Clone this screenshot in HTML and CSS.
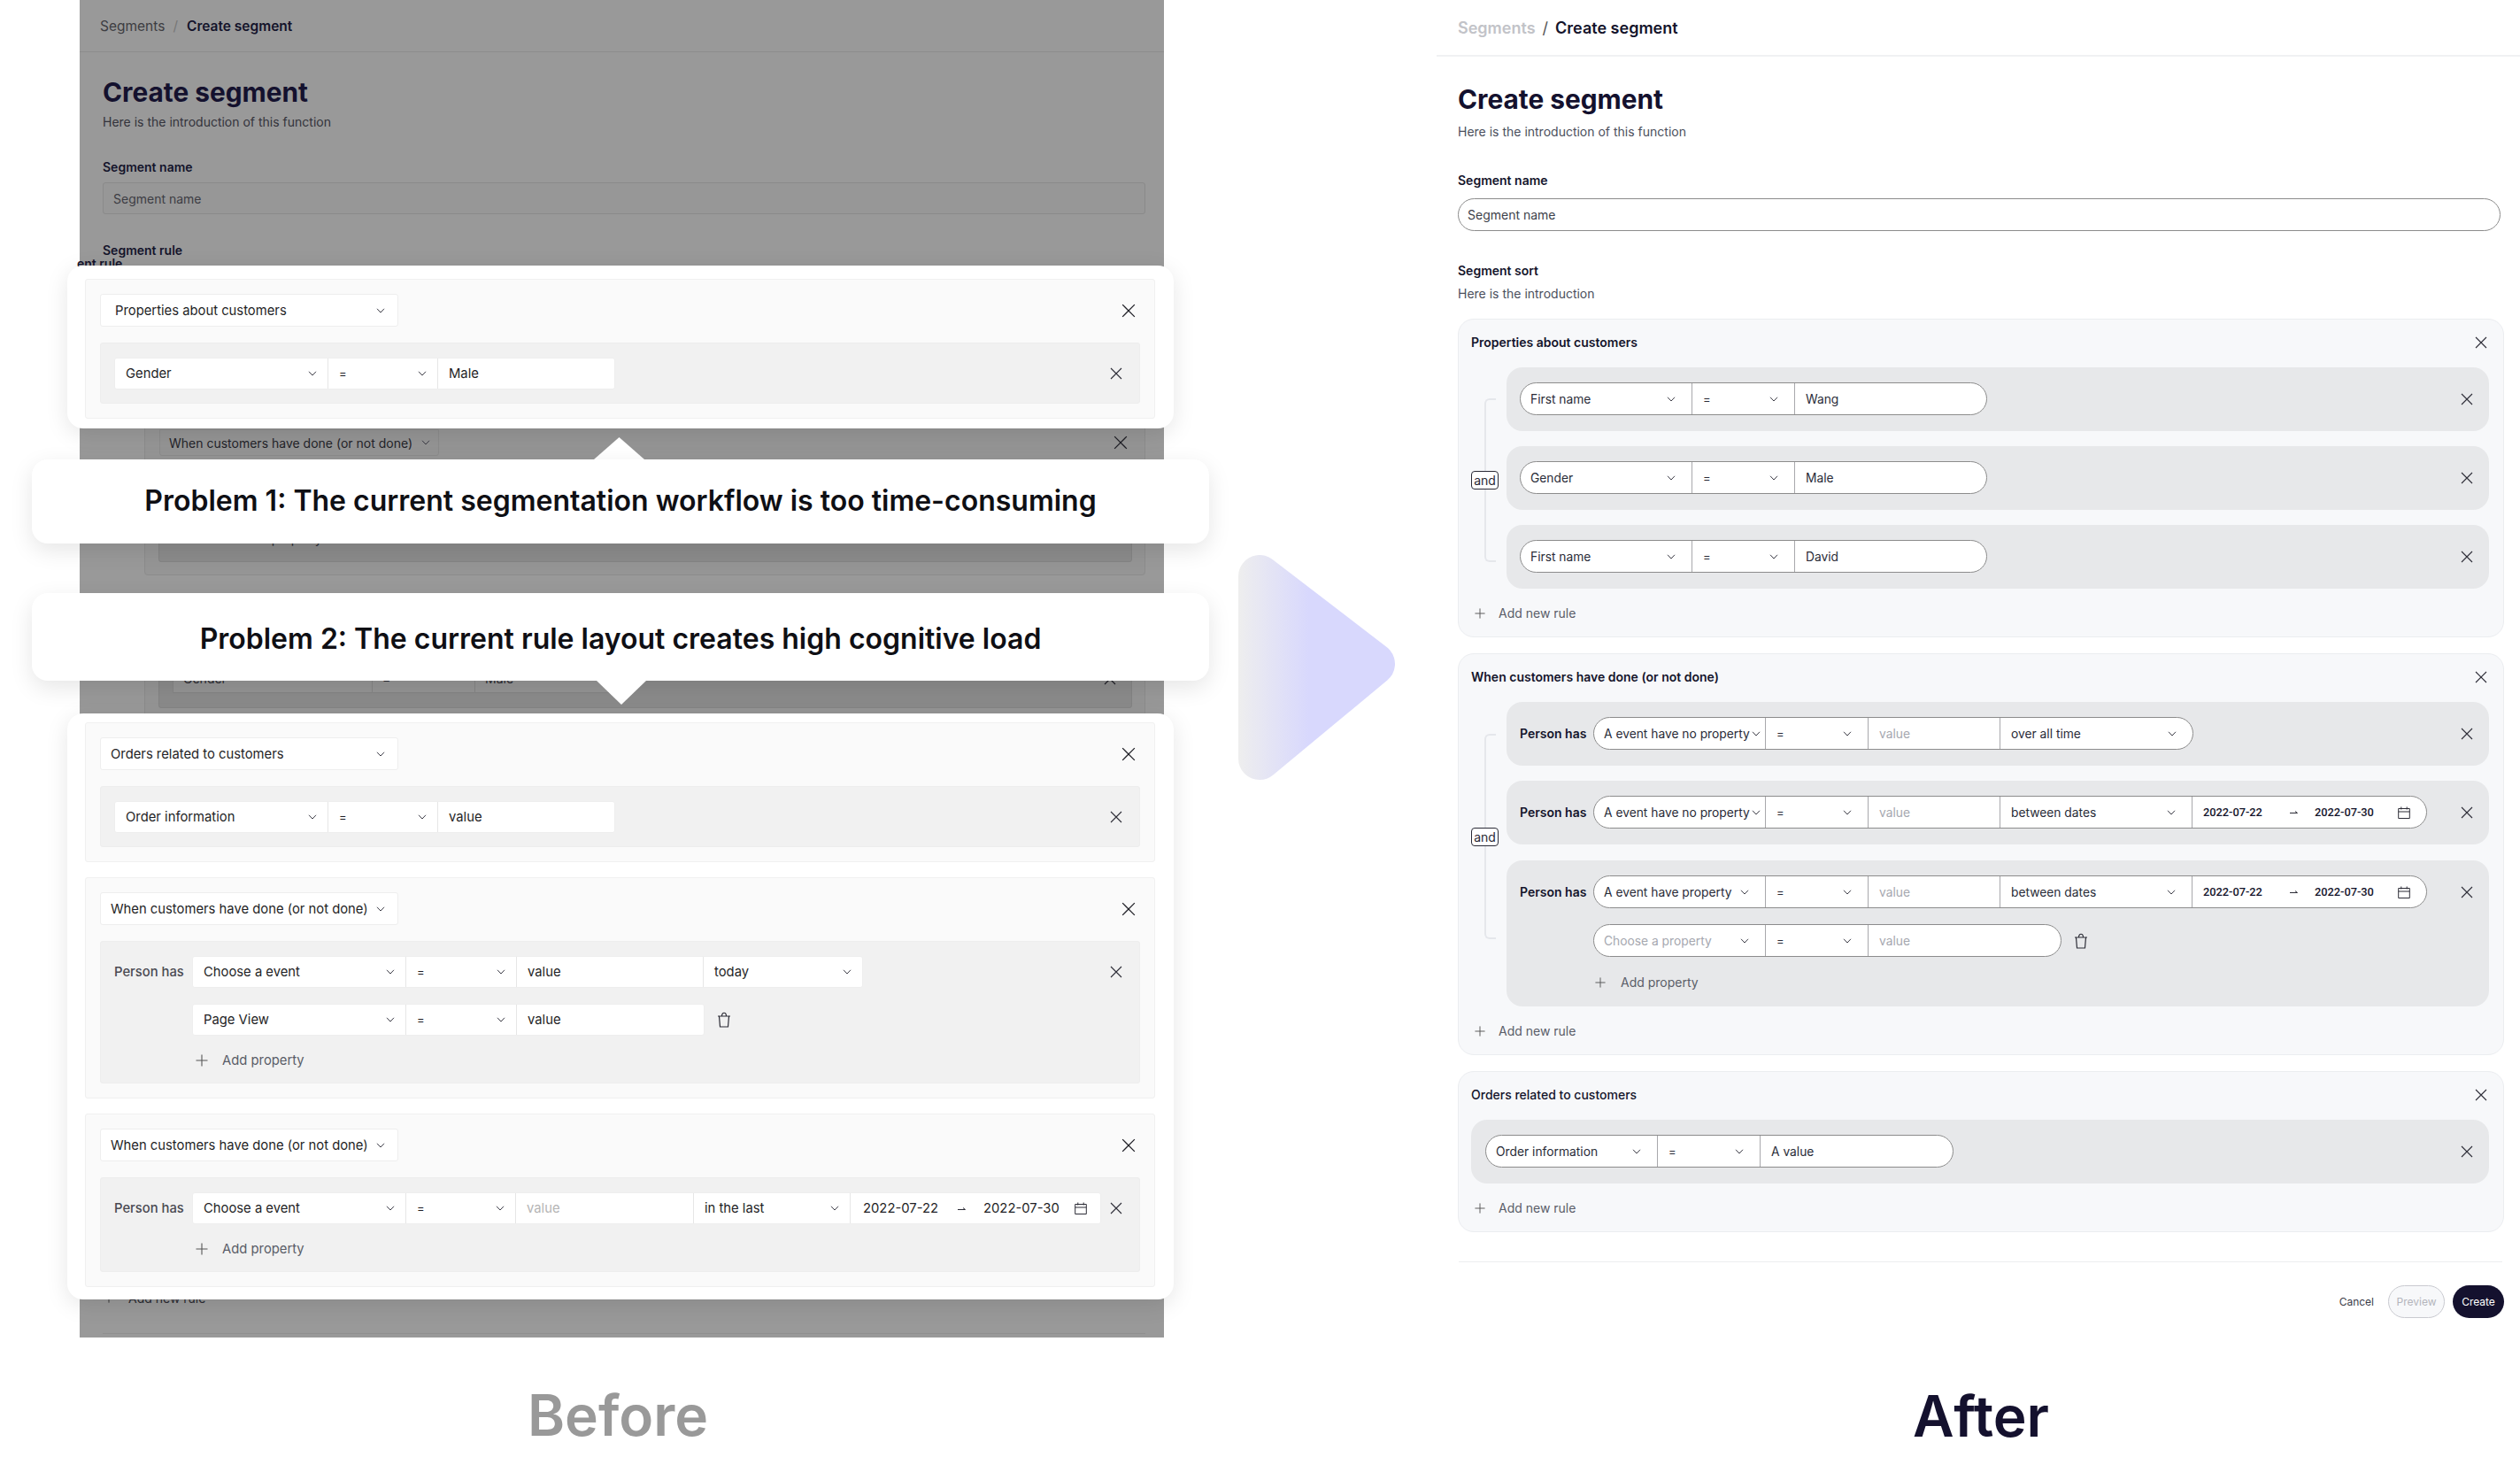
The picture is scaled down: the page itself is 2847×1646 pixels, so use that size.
FILE: index.html
```html
<!DOCTYPE html>
<html lang="en">
<head>
<meta charset="utf-8">
<title>Create segment: before and after</title>
<link rel="stylesheet" href="styles.css">
</head>
<body>
<svg class="sprite" aria-hidden="true">
  <symbol id="chev" viewBox="0 0 10 6"><path d="M1 .8 5 5l4-4.200" fill="none" stroke="currentColor" stroke-width="1"/></symbol>
  <symbol id="x" viewBox="0 0 14 14"><path d="M1 1l12 12M13 1 1 13" fill="none" stroke="currentColor" stroke-width="1.100"/></symbol>
  <symbol id="plus" viewBox="0 0 14 14"><path d="M7 .5v13M.5 7h13" fill="none" stroke="currentColor" stroke-width="1.100"/></symbol>
  <symbol id="trash" viewBox="0 0 16 18"><path d="M2.500 5h11l-1 12h-9zM1 5h14M5.500 5c0-5 5-5 5 0" fill="none" stroke="currentColor" stroke-width="1.200"/></symbol>
  <symbol id="cal" viewBox="0 0 14 14"><path d="M.7 2.500h12.600v11H.7zM.7 6h12.600M3.800.5v3M10.200.5v3" fill="none" stroke="currentColor" stroke-width="1"/></symbol>
  <symbol id="to" viewBox="0 0 9 5"><path d="M0 3.500h8.500L6 1.500" fill="none" stroke="currentColor" stroke-width="1"/></symbol>
</svg>

<main class="page">
  <section class="before-col">
    <div class="before">
      <header class="crumbs">
        <span class="crumb-parent">Segments</span><span class="crumb-sep">/</span><span class="crumb-current">Create segment</span>
      </header>
      <div class="ghost-form">
        <h1 class="title">Create segment</h1>
        <p class="intro">Here is the introduction of this function</p>
        <div class="label label-name">Segment name</div>
        <div class="name-input">Segment name</div>
        <div class="label label-rule">Segment rule</div>

        <div class="ghost-rules">
          <div class="ghost-box ghost-box-a">
            <div class="ghost-head">
              <div class="ghost-select">When customers have done (or not done)<svg class="chev"><use href="#chev"/></svg></div>
              <svg class="ix ghost-x"><use href="#x"/></svg>
            </div>
            <div class="ghost-inner ghost-inner-a"><span class="ghost-add">Add property</span></div>
          </div>
          <div class="ghost-box ghost-box-b">
            <div class="ghost-inner ghost-inner-b">
              <div class="ghost-fields">
                <span class="gf gf-1">Gender</span><span class="gf gf-2">=</span><span class="gf gf-3">Male</span>
              </div>
              <svg class="ix ghost-row-x"><use href="#x"/></svg>
            </div>
          </div>
          <div class="ghost-new"><svg class="ghost-plus"><use href="#plus"/></svg>Add new rule</div>
          <div class="ghost-line"></div>
        </div>
      </div>

      <span class="clipped-label">ent rule</span>

      <div class="card card-top">
        <div class="box">
          <div class="box-head">
            <div class="select">Properties about customers<svg class="chev"><use href="#chev"/></svg></div>
            <svg class="ix box-x"><use href="#x"/></svg>
          </div>
          <div class="row">
            <div class="fields">
              <div class="f l241">Gender<svg class="chev"><use href="#chev"/></svg></div>
              <div class="f l124 op">=<svg class="chev"><use href="#chev"/></svg></div>
              <div class="f l199">Male</div>
            </div>
            <svg class="ix row-x"><use href="#x"/></svg>
          </div>
        </div>
      </div>

      <div class="notch notch-up"></div>
      <div class="problem problem-one">Problem 1: The current segmentation workflow is too time-consuming</div>
      <div class="problem problem-two">Problem 2: The current rule layout creates high cognitive load</div>
      <div class="notch notch-down"></div>

      <div class="card card-bottom">
        <div class="box">
          <div class="box-head">
            <div class="select tight">Orders related to customers<svg class="chev"><use href="#chev"/></svg></div>
            <svg class="ix box-x"><use href="#x"/></svg>
          </div>
          <div class="row">
            <div class="fields">
              <div class="f l241">Order information<svg class="chev"><use href="#chev"/></svg></div>
              <div class="f l124 op">=<svg class="chev"><use href="#chev"/></svg></div>
              <div class="f l199">value</div>
            </div>
            <svg class="ix row-x"><use href="#x"/></svg>
          </div>
        </div>

        <div class="box">
          <div class="box-head">
            <div class="select tight">When customers have done (or not done)<svg class="chev"><use href="#chev"/></svg></div>
            <svg class="ix box-x"><use href="#x"/></svg>
          </div>
          <div class="row">
            <div class="person">Person has</div>
            <div class="stack">
              <div class="fields">
                <div class="f l241">Choose a event<svg class="chev"><use href="#chev"/></svg></div>
                <div class="f l125 op">=<svg class="chev"><use href="#chev"/></svg></div>
                <div class="f l211">value</div>
                <div class="f l179">today<svg class="chev"><use href="#chev"/></svg></div>
              </div>
              <div class="field-line">
                <div class="fields">
                  <div class="f l241">Page View<svg class="chev"><use href="#chev"/></svg></div>
                  <div class="f l125 op">=<svg class="chev"><use href="#chev"/></svg></div>
                  <div class="f l211">value</div>
                </div>
                <svg class="trash"><use href="#trash"/></svg>
              </div>
              <div class="add add-prop"><svg class="plus"><use href="#plus"/></svg>Add property</div>
            </div>
            <svg class="ix row-x"><use href="#x"/></svg>
          </div>
        </div>

        <div class="box">
          <div class="box-head">
            <div class="select tight">When customers have done (or not done)<svg class="chev"><use href="#chev"/></svg></div>
            <svg class="ix box-x"><use href="#x"/></svg>
          </div>
          <div class="row">
            <div class="person">Person has</div>
            <div class="stack">
              <div class="fields">
                <div class="f l241">Choose a event<svg class="chev"><use href="#chev"/></svg></div>
                <div class="f l124 op">=<svg class="chev"><use href="#chev"/></svg></div>
                <div class="f l201 muted">value</div>
                <div class="f l177">in the last<svg class="chev"><use href="#chev"/></svg></div>
                <div class="f l282 dates"><span>2022-07-22</span><svg class="to"><use href="#to"/></svg><span>2022-07-30</span><svg class="cal"><use href="#cal"/></svg></div>
              </div>
              <div class="add add-prop"><svg class="plus"><use href="#plus"/></svg>Add property</div>
            </div>
            <svg class="ix row-x"><use href="#x"/></svg>
          </div>
        </div>
      </div>
    </div>
    <div class="caption caption-before">Before</div>
  </section>

  <svg class="next" viewBox="0 0 177 254" aria-hidden="true">
    <defs>
      <linearGradient id="nextfill" gradientUnits="userSpaceOnUse" x1="0" y1="0" x2="80" y2="0">
        <stop offset="0" stop-color="#eeeeee"/>
        <stop offset="1" stop-color="#d8d8fd"/>
      </linearGradient>
    </defs>
    <polygon points="24,24 24,230 153,123" fill="url(#nextfill)" stroke="url(#nextfill)" stroke-width="48" stroke-linejoin="round"/>
  </svg>

  <section class="after-col">
    <header class="crumbs">
      <span class="crumb-parent">Segments</span><span class="crumb-sep">/</span><span class="crumb-current">Create segment</span>
    </header>
    <div class="form">
      <h1 class="title">Create segment</h1>
      <p class="intro">Here is the introduction of this function</p>
      <div class="label label-name">Segment name</div>
      <div class="name-input">Segment name</div>
      <div class="label label-sort">Segment sort</div>
      <p class="intro intro-sort">Here is the introduction</p>

      <div class="box">
        <div class="box-head">
          <div class="box-title">Properties about customers</div>
          <svg class="ix box-x"><use href="#x"/></svg>
        </div>
        <div class="group">
          <div class="connector"><div class="bracket"><span class="and">and</span></div></div>
          <div class="rules">
            <div class="row">
              <div class="fields">
                <div class="f r194">First name<svg class="chev"><use href="#chev"/></svg></div>
                <div class="f r116 op">=<svg class="chev"><use href="#chev"/></svg></div>
                <div class="f r216">Wang</div>
              </div>
              <svg class="ix row-x"><use href="#x"/></svg>
            </div>
            <div class="row">
              <div class="fields">
                <div class="f r194">Gender<svg class="chev"><use href="#chev"/></svg></div>
                <div class="f r116 op">=<svg class="chev"><use href="#chev"/></svg></div>
                <div class="f r216">Male</div>
              </div>
              <svg class="ix row-x"><use href="#x"/></svg>
            </div>
            <div class="row">
              <div class="fields">
                <div class="f r194">First name<svg class="chev"><use href="#chev"/></svg></div>
                <div class="f r116 op">=<svg class="chev"><use href="#chev"/></svg></div>
                <div class="f r216">David</div>
              </div>
              <svg class="ix row-x"><use href="#x"/></svg>
            </div>
          </div>
        </div>
        <div class="add add-rule"><svg class="plus"><use href="#plus"/></svg>Add new rule</div>
      </div>

      <div class="box">
        <div class="box-head">
          <div class="box-title">When customers have done (or not done)</div>
          <svg class="ix box-x"><use href="#x"/></svg>
        </div>
        <div class="group">
          <div class="connector connector-tall"><div class="bracket"><span class="and">and</span></div></div>
          <div class="rules">
            <div class="row">
              <div class="person">Person has</div>
              <div class="stack">
                <div class="fields">
                  <div class="f r194 snug">A event have no property<svg class="chev"><use href="#chev"/></svg></div>
                  <div class="f r116 op">=<svg class="chev"><use href="#chev"/></svg></div>
                  <div class="f r149 muted">value</div>
                  <div class="f r217">over all time<svg class="chev"><use href="#chev"/></svg></div>
                </div>
              </div>
              <svg class="ix row-x"><use href="#x"/></svg>
            </div>
            <div class="row">
              <div class="person">Person has</div>
              <div class="stack">
                <div class="fields">
                  <div class="f r194 snug">A event have no property<svg class="chev"><use href="#chev"/></svg></div>
                  <div class="f r116 op">=<svg class="chev"><use href="#chev"/></svg></div>
                  <div class="f r149 muted">value</div>
                  <div class="f r217">between dates<svg class="chev"><use href="#chev"/></svg></div>
                  <div class="f r264 dates"><span>2022-07-22</span><svg class="to"><use href="#to"/></svg><span>2022-07-30</span><svg class="cal"><use href="#cal"/></svg></div>
                </div>
              </div>
              <svg class="ix row-x"><use href="#x"/></svg>
            </div>
            <div class="row row-tall">
              <div class="person">Person has</div>
              <div class="stack">
                <div class="fields">
                  <div class="f r194">A event have property<svg class="chev"><use href="#chev"/></svg></div>
                  <div class="f r116 op">=<svg class="chev"><use href="#chev"/></svg></div>
                  <div class="f r149 muted">value</div>
                  <div class="f r217">between dates<svg class="chev"><use href="#chev"/></svg></div>
                  <div class="f r264 dates"><span>2022-07-22</span><svg class="to"><use href="#to"/></svg><span>2022-07-30</span><svg class="cal"><use href="#cal"/></svg></div>
                </div>
                <div class="field-line">
                  <div class="fields">
                    <div class="f r194 muted">Choose a property<svg class="chev"><use href="#chev"/></svg></div>
                    <div class="f r116 op">=<svg class="chev"><use href="#chev"/></svg></div>
                    <div class="f r217 muted">value</div>
                  </div>
                  <svg class="trash"><use href="#trash"/></svg>
                </div>
                <div class="add add-prop"><svg class="plus"><use href="#plus"/></svg>Add property</div>
              </div>
              <svg class="ix row-x"><use href="#x"/></svg>
            </div>
          </div>
        </div>
        <div class="add add-rule"><svg class="plus"><use href="#plus"/></svg>Add new rule</div>
      </div>

      <div class="box">
        <div class="box-head">
          <div class="box-title box-title-plain">Orders related to customers</div>
          <svg class="ix box-x"><use href="#x"/></svg>
        </div>
        <div class="row row-solo">
          <div class="fields">
            <div class="f r194">Order information<svg class="chev"><use href="#chev"/></svg></div>
            <div class="f r116 op">=<svg class="chev"><use href="#chev"/></svg></div>
            <div class="f r217">A value</div>
          </div>
          <svg class="ix row-x"><use href="#x"/></svg>
        </div>
        <div class="add add-rule"><svg class="plus"><use href="#plus"/></svg>Add new rule</div>
      </div>

      <div class="form-line"></div>
      <div class="actions">
        <span class="cancel">Cancel</span>
        <span class="btn btn-preview">Preview</span>
        <span class="btn btn-create">Create</span>
      </div>
    </div>
    <div class="caption caption-after">After</div>
  </section>
</main>
</body>
</html>
```

FILE: styles.css
```css
* { box-sizing: border-box; }
html, body { margin: 0; padding: 0; background: #fff; }
body {
  width: 2847px;
  height: 1646px;
  overflow: hidden;
  font-family: Inter, "Liberation Sans", sans-serif;
  font-size: 14px;
  color: #14142b;
}
.sprite { position: absolute; width: 0; height: 0; }
.page { display: flex; align-items: flex-start; padding-left: 90px; }

/* shared text */
.crumbs { display: flex; align-items: center; }
.title { margin: 0; font-size: 29.800px; line-height: 36px; font-weight: 700; color: #14112e; }
.intro { margin: 0; font-size: 14px; line-height: 20px; color: #4b4f5c; }
.label { font-weight: 600; line-height: 20px; color: #14142b; }
.caption { font-size: 64px; line-height: 80px; font-weight: 600; text-align: center; }

/* icons */
.chev { width: 10px; height: 6px; flex: none; color: #3c3c46; }
.ix { width: 14px; height: 14px; flex: none; color: #2c2c36; }
.plus { width: 12px; height: 12px; flex: none; color: #555; }
.trash { width: 16px; height: 18px; flex: none; margin-left: 14px; color: #2c2c36; }
.cal { width: 14px; height: 14px; flex: none; color: #2c2c36; }
.to { width: 9px; height: 5px; flex: none; color: #2c2c36; }

/* components, common to both sides */
.box-head { display: flex; align-items: center; justify-content: space-between; }
.row { display: flex; background: #e7e8ea; }
.fields { display: inline-flex; flex: none; background: #fff; overflow: hidden; }
.f {
  display: flex;
  align-items: center;
  justify-content: space-between;
  height: 100%;
  white-space: nowrap;
  flex: none;
}
.person { flex: none; font-weight: 600; }
.stack { flex: 1; display: flex; flex-direction: column; align-items: flex-start; }
.field-line { display: flex; align-items: center; }
.add { display: flex; align-items: center; line-height: 20px; color: #5a5d68; }
.muted { color: #a6a8b0; }

/* ---------- BEFORE ---------- */
.before-col { width: 1225px; flex: none; }
.before { position: relative; height: 1511px; background: #999; color: #1a1a22; }
.before .crumbs { height: 59px; padding: 0 0 0 23px; border-bottom: 1px solid #8d8d8d; font-size: 15.500px; }
.before .crumb-parent { color: #3d3d42; }
.before .crumb-sep { margin: 0 10px 0 9px; color: #777; }
.before .crumb-current { font-weight: 600; color: #14142b; }

.ghost-form { padding: 27px 21px 0 26px; }
.before .intro { margin-top: 6px; color: #33333b; width: 300px; }
.before .label-name { margin-top: 31px; }
.before .name-input {
  margin-top: 7px;
  height: 36px;
  display: flex;
  align-items: center;
  padding-left: 11px;
  background: #979797;
  border: 1px solid #8a8a8a;
  border-radius: 3px;
  color: #3d3d44;
}
.before .label-rule { margin-top: 31px; }

.ghost-rules { margin: 162px 0 0 47px; }
.ghost-box { border: 1px solid #8c8c8c; border-radius: 4px; background: #959595; padding: 0 14px; }
.ghost-box-a { height: 195px; padding-top: 30px; }
.ghost-head { display: flex; align-items: center; justify-content: space-between; height: 28px; }
.ghost-select {
  display: flex;
  align-items: center;
  justify-content: space-between;
  width: 316px;
  height: 30px;
  margin-left: 2px;
  padding: 0 9px 0 10px;
  border: 1px solid #8b8b8b;
  border-radius: 0 0 3px 3px;
  background: #949494;
  font-size: 14px;
  color: #232329;
}
.ghost-x { width: 16px; height: 16px; margin-right: 5px; color: #1f1f26; }
.ghost-inner { background: #8b8b8b; border: 1px solid #848484; border-radius: 3px; margin-left: 1px; }
.ghost-inner-a { margin-top: 16px; height: 105px; padding: 68px 0 0 96px; color: #2c2c33; font-size: 14px; line-height: 20px; }
.ghost-box-b { margin-top: 21px; height: 780px; padding-top: 40px; }
.ghost-inner-b { height: 88px; display: flex; align-items: flex-end; justify-content: space-between; padding: 0 17px 16px 15px; }
.ghost-fields { display: flex; height: 36px; width: 502px; border: 1px solid #858585; background: #949494; color: #2c2c33; }
.gf { display: block; padding: 0 0 0 11px; line-height: 38px; }
.gf-1 { width: 225px; border-right: 1px solid #858585; }
.gf-2 { width: 116px; border-right: 1px solid #858585; }
.ghost-row-x { margin-bottom: 9px; color: #1f1f26; }
.ghost-new { margin: 6px 0 0 -45px; color: #2c2c33; display: flex; align-items: center; line-height: 20px; height: 20px; }
.ghost-plus { width: 10px; height: 14px; margin-right: 17px; color: #222; }
.ghost-line { margin: 29px 0 0 -47px; height: 1px; background: #8f8f8f; }

.clipped-label {
  position: absolute;
  left: -3px;
  top: 288px;
  font-weight: 600;
  font-size: 14px;
  line-height: 20px;
  color: #14142b;
}

.card {
  position: absolute;
  left: -14px;
  width: 1250px;
  background: #fff;
  border-radius: 18px;
  box-shadow: 0 6px 26px rgba(0, 0, 0, .1);
  padding: 0 21px 0 20px;
}
.card-top { top: 300px; height: 184px; padding-top: 15px; }
.card-bottom { top: 806px; height: 662px; padding-top: 10px; display: flex; flex-direction: column; gap: 17px; }
.card .box { background: #fafafa; border: 1px solid #f0f0f0; border-radius: 3px; padding: 16px 16px 16px; }
.card .box-x { width: 16px; height: 16px; margin-right: 5px; color: #1f1f26; }
.select {
  display: flex;
  align-items: center;
  justify-content: space-between;
  width: 337px;
  height: 37px;
  padding: 0 14px 0 16px;
  background: #fff;
  border: 1px solid #eeeeee;
  border-radius: 3px;
  font-size: 14.800px;
  color: #1f1f26;
}
.select.tight { padding-left: 11px; }
.card .row {
  margin-top: 18px;
  background: #f1f1f1;
  border: 1px solid #ededed;
  border-radius: 3px;
  padding: 16px 19px 15px 15px;
  align-items: flex-start;
}
.card .fields { height: 36px; border: 1px solid #eeeeee; border-radius: 3px; }
.card .f { padding: 0 12px; border-right: 1px solid #e6e6e6; font-size: 14.800px; color: #1f1f26; }
.card .f:last-child { border-right: 0; }
.card .f.muted { color: #b5b5b5; }
.card .f.op { font-size: 13px; }
.l241 { width: 241px; }
.l124 { width: 124px; }
.l125 { width: 125px; }
.l199 { width: 199px; }
.l211 { width: 211px; }
.l179 { width: 179px; }
.l201 { width: 201px; }
.l177 { width: 177px; }
.l282 { width: 282px; }
.card .person { width: 88px; line-height: 36px; font-size: 14.800px; color: #4a4a52; font-weight: 500; }
.card .row-x { margin: 11px 0 0 auto; }
.card .field-line { margin-top: 18px; }
.card .add-prop { margin: 18px 0 0 4px; font-size: 14.800px; }
.card .add-prop .plus { width: 14px; height: 14px; margin-right: 16px; }
.card .stack { min-width: 0; }

.problem {
  position: absolute;
  left: -54px;
  width: 1330px;
  display: flex;
  align-items: center;
  justify-content: center;
  background: #fff;
  border-radius: 18px;
  box-shadow: 0 8px 26px rgba(0, 0, 0, .1);
  font-size: 32px;
  font-weight: 600;
  color: #0f0f14;
}
.problem-one { top: 519px; height: 95px; padding-bottom: 2px; }
.problem-two { top: 670px; height: 99px; padding-top: 3px; }
.notch { position: absolute; background: #fff; }
.notch-up { left: 581px; top: 494px; width: 57px; height: 25px; clip-path: polygon(50% 0, 100% 100%, 0 100%); }
.notch-down { left: 584px; top: 769px; width: 56px; height: 27px; clip-path: polygon(0 0, 100% 0, 50% 100%); }
.caption-before { margin-top: 48px; padding-right: 9px; color: #999; }

/* ---------- ARROW ---------- */
.next { flex: none; width: 177px; height: 254px; margin: 627px 47px 0 84px; }

/* ---------- AFTER ---------- */
.after-col { width: 1224px; flex: none; }
.after-col .crumbs { height: 64px; padding: 1px 0 0 24px; border-bottom: 2px solid #f0f1f3; font-size: 18px; font-weight: 600; }
.after-col .crumb-parent { color: #c2c3c8; }
.after-col .crumb-sep { margin: 0 8px; font-weight: 400; color: #555; }
.after-col .crumb-current { color: #14142b; }

.form { padding: 30px 18px 0 24px; }
.form .intro { margin-top: 9px; }
.form .label-name { margin-top: 35px; }
.form .name-input {
  margin: 10px 4px 0 0;
  height: 37px;
  display: flex;
  align-items: center;
  padding-left: 10px;
  background: #fff;
  border: 1px solid #8c8c8c;
  border-radius: 19px;
  color: #3d3f4a;
}
.form .label-sort { margin-top: 35px; }
.form .intro-sort { margin-top: 6px; }
.form .box { margin-top: 18px; background: #f7f8fa; border: 1px solid #ebedf0; border-radius: 18px; padding: 16px 16px 16px 14px; }
.box-head { line-height: 20px; }
.box-title { font-weight: 600; color: #14142b; }
.box-title-plain { font-weight: 500; }
.form .box-x { margin-right: 2px; }
.group { display: flex; margin-top: 18px; }
.connector { width: 40px; flex: none; padding: 35px 0 30px 15px; }
.connector-tall { padding: 36px 0 76px 15px; }
.bracket {
  height: 100%;
  width: 13px;
  display: flex;
  align-items: center;
  border: 2px solid #e5e7eb;
  border-right: 0;
  border-radius: 6px 0 0 6px;
}
.and {
  flex: none;
  margin-left: -17px;
  width: 31px;
  height: 21px;
  display: flex;
  align-items: center;
  justify-content: center;
  background: #fff;
  border: 1px solid #2a2a36;
  border-radius: 4px;
  font-size: 14px;
  color: #2a2a36;
}
.rules { flex: 1; display: flex; flex-direction: column; gap: 17px; }
.form .row { height: 72px; border-radius: 18px; padding: 17px 18px 0 15px; align-items: flex-start; }
.form .row-tall { height: 165px; margin-top: 1px; }
.form .row-solo { margin-top: 18px; padding-left: 16px; }
.form .fields { height: 37px; border: 1px solid #8c8c8c; border-radius: 19px; }
.form .f { padding: 0 18px 0 12px; border-right: 1px solid #a8a8ac; color: #2a2c38; font-size: 13.800px; }
.form .f:first-child { padding-left: 11px; }
.form .f:last-child { border-right: 0; }
.form .f.op { font-size: 13px; }
.form .f.muted { color: #a6a8b0; }
.form .f.snug { padding-right: 5px; }
.form .row-x { margin: 12px 0 0 auto; }
.form .person { width: 83px; line-height: 37px; }
.r194 { width: 194px; }
.r116 { width: 116px; }
.r216 { width: 216px; }
.r149 { width: 149px; }
.r217 { width: 217px; }
.r264 { width: 264px; }
.form .f.dates { justify-content: flex-start; font-family: Roboto, Inter, sans-serif; font-size: 12.800px; font-weight: 500; color: #14142b; }
.form .f.dates span:first-child { width: 100px; }
.form .f.dates .to { margin-right: 19px; }
.form .f.dates span:nth-of-type(2) { width: 96px; }
.card .f.dates { justify-content: flex-start; }
.card .f.dates span:first-child { width: 107px; margin-left: 2px; }
.card .f.dates .to { margin-right: 20px; }
.card .f.dates span:nth-of-type(2) { width: 103px; }

.form .field-line { margin-top: 18px; }
.form .add-prop { margin: 19px 0 0 2px; }
.form .add-prop .plus { margin-right: 17px; }
.add-rule { margin: 18px 0 0 4px; }
.add-rule .plus { margin-right: 15px; }
.form-line { margin: 33px 2px 0 1px; height: 1px; background: #eceef0; }
.actions { display: flex; align-items: center; justify-content: flex-end; gap: 9px; margin-top: 26px; font-size: 12px; }
.cancel { margin-right: 7px; color: #3a3c48; }
.btn { display: flex; align-items: center; justify-content: center; height: 37px; border-radius: 19px; }
.btn-preview { width: 64px; background: #f7f8fa; border: 1px solid #c9cad0; color: #b4b5bc; }
.btn-create { width: 58px; background: #14112e; color: #fff; }
.caption-after { margin-top: 71px; padding-left: 6px; color: #14112e; }
```
